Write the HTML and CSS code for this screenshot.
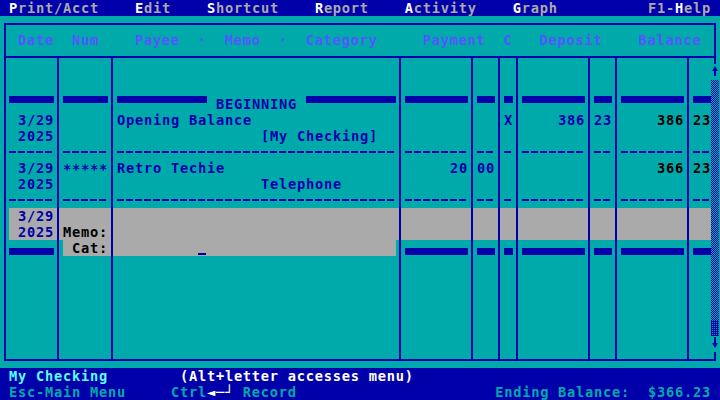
FILE: index.html
```html
<!DOCTYPE html>
<html lang="en">
<head>
<meta charset="utf-8">
<title>My Checking – Register</title>
<link rel="stylesheet" href="styles.css">
</head>
<body>
<div class="screen">
  <nav class="menubar">
    <span><span class="key">P</span>rint/Acct</span>
    <span><span class="key">E</span>dit</span>
    <span><span class="key">S</span>hortcut</span>
    <span><span class="key">R</span>eport</span>
    <span><span class="key">A</span>ctivity</span>
    <span><span class="key">G</span>raph</span>
    <span class="help">F1-<span class="key">H</span>elp</span>
  </nav>

  <main class="register">
    <div class="frame"></div>
    <div class="head"> Date  Num    Payee  ·  Memo  ·  Category     Payment  C   Deposit    Balance</div>
    <div class="rule"></div>

    <!-- highlighted entry line -->
    <div class="band"></div>
    <div class="band-cat"></div>

    <!-- column dividers -->
    <div class="vline d1"></div>
    <div class="vline d2"></div>
    <div class="vline d3"></div>
    <div class="vline d4"></div>
    <div class="vline d5"></div>
    <div class="vline d6"></div>
    <div class="vline d7"></div>
    <div class="vline d8"></div>
    <div class="vline d9"></div>

    <svg class="scrollbar" width="9" height="288" viewBox="0 0 9 288">
      <defs>
        <pattern id="shade-mid" width="2" height="2" patternUnits="userSpaceOnUse">
          <rect x="0" y="0" width="1" height="1" fill="#0000aa"/>
          <rect x="1" y="1" width="1" height="1" fill="#0000aa"/>
        </pattern>
        <pattern id="shade-dark" width="2" height="2" patternUnits="userSpaceOnUse">
          <rect x="0" y="0" width="2" height="2" fill="#0000aa"/>
          <rect x="1" y="0" width="1" height="1" fill="#00aaaa"/>
        </pattern>
      </defs>
      <path d="M4 2 L7 7 H1 Z" fill="#0000aa"/>
      <rect x="3" y="6" width="2" height="6" fill="#0000aa"/>
      <rect x="0" y="16" width="8" height="240" fill="url(#shade-mid)"/>
      <rect x="0" y="256" width="8" height="16" fill="url(#shade-dark)"/>
      <rect x="3" y="273" width="2" height="7" fill="#0000aa"/>
      <path d="M1 279 H7 L4 284 Z" fill="#0000aa"/>
    </svg>

    <!-- opening balance marker -->
    <div class="bar-top c-date r6"></div>
    <div class="bar-top c-num r6"></div>
    <div class="begin c-payee r6"><span class="bar-top"></span><span>BEGINNING</span><span class="bar-top"></span></div>
    <div class="bar-top c-pay r6"></div>
    <div class="bar-top c-payc r6"></div>
    <div class="bar-top c-clr r6"></div>
    <div class="bar-top c-dep r6"></div>
    <div class="bar-top c-depc r6"></div>
    <div class="bar-top c-bal r6"></div>
    <div class="bar-top c-balc r6"></div>

    <!-- transaction: opening balance -->
    <div class="c-date r7 right">3/29</div>
    <div class="c-payee r7">Opening Balance</div>
    <div class="c-clr r7">X</div>
    <div class="c-dep r7 right">386</div>
    <div class="c-depc r7">23</div>
    <div class="c-bal r7 right black">386</div>
    <div class="c-balc r7 black">23</div>
    <div class="c-date r8 right">2025</div>
    <div class="c-payee r8 cat">[My Checking]</div>

    <div class="dash c-date r9"></div>
    <div class="dash c-num r9"></div>
    <div class="dash c-payee r9"></div>
    <div class="dash c-pay r9"></div>
    <div class="dash c-payc r9"></div>
    <div class="dash c-clr r9"></div>
    <div class="dash c-dep r9"></div>
    <div class="dash c-depc r9"></div>
    <div class="dash c-bal r9"></div>
    <div class="dash c-balc r9"></div>

    <!-- transaction: telephone -->
    <div class="c-date r10 right">3/29</div>
    <div class="c-num r10 stars">*****</div>
    <div class="c-payee r10">Retro Techie</div>
    <div class="c-pay r10 right">20</div>
    <div class="c-payc r10">00</div>
    <div class="c-bal r10 right black">366</div>
    <div class="c-balc r10 black">23</div>
    <div class="c-date r11 right">2025</div>
    <div class="c-payee r11 cat">Telephone</div>

    <div class="dash c-date r12"></div>
    <div class="dash c-num r12"></div>
    <div class="dash c-payee r12"></div>
    <div class="dash c-pay r12"></div>
    <div class="dash c-payc r12"></div>
    <div class="dash c-clr r12"></div>
    <div class="dash c-dep r12"></div>
    <div class="dash c-depc r12"></div>
    <div class="dash c-bal r12"></div>
    <div class="dash c-balc r12"></div>

    <!-- new entry -->
    <div class="c-date r13 right">3/29</div>
    <div class="c-date r14 right">2025</div>
    <div class="c-num r14 right black">Memo:</div>
    <div class="bar-bot c-date r15"></div>
    <div class="c-num r15 right black">Cat:</div>
    <div class="cursor c-payee r15"></div>
    <div class="bar-bot c-pay r15"></div>
    <div class="bar-bot c-payc r15"></div>
    <div class="bar-bot c-clr r15"></div>
    <div class="bar-bot c-dep r15"></div>
    <div class="bar-bot c-depc r15"></div>
    <div class="bar-bot c-bal r15"></div>
    <div class="bar-bot c-balc r15"></div>
  </main>

  <footer class="status">
    <div class="status-line">
      <span class="acct">My Checking</span>
      <span class="hint">(Alt+letter accesses menu)</span>
    </div>
    <div class="status-line keys">
      <span class="esc">Esc-Main Menu</span>
      <span>Ctrl<span class="enter">◄─┘</span> Record</span>
      <span class="ending">Ending Balance:  $366.23</span>
    </div>
  </footer>
</div>
</body>
</html>
```
FILE: styles.css
```css
* {
  box-sizing: border-box;
  margin: 0;
  padding: 0;
}

html,
body {
  width: 720px;
  height: 400px;
  overflow: hidden;
}

/* 9px character cells: 13.7px DejaVu Sans Mono advances 8.25px, plus spacing */
body {
  background: #00aaaa;
  color: #0000aa;
  font-family: "DejaVu Sans Mono", "Liberation Mono", monospace;
  font-weight: bold;
  font-size: 13.7px;
  letter-spacing: 0.752px;
  line-height: 16px;
}

/* 80 x 25 character screen: 9px cells, 16px rows */
.screen {
  display: grid;
  grid-template-rows: 16px 352px 32px;
  height: 400px;
}

/* ---- menu bar ---- */
.menubar {
  display: flex;
  gap: 36px;
  padding: 0 9px;
  background: #0000aa;
  color: #aaaaaa;
  white-space: pre;
}

.menubar .key {
  color: #ffffff;
}

.menubar .help {
  margin-left: auto;
}

/* ---- register ---- */
.register {
  display: grid;
  grid-template-columns:
    9px 45px 9px 45px 9px 279px 9px
    63px 9px 18px 9px 9px 9px
    63px 9px 18px 9px 63px 9px 18px 9px;
  grid-template-rows: repeat(22, 16px);
  white-space: pre;
}

.frame {
  grid-column: 1 / -1;
  grid-row: 1 / -1;
  margin: 7px 4px;
  border: 2px solid #0000aa;
}

.head {
  grid-column: 2 / 21;
  grid-row: 2;
  color: #5555ff;
}

.rule {
  grid-column: 1 / -1;
  grid-row: 3;
  align-self: start;
  height: 2px;
  margin: 8px 4px 0;
  background: #0000aa;
}

.band {
  grid-column: 2 / 21;
  grid-row: 13 / 15;
  background: #aaaaaa;
}

.band-cat {
  grid-column: 4 / 7;
  grid-row: 15;
  background: #aaaaaa;
}

.vline {
  grid-row: 3 / 23;
  justify-self: start;
  width: 2px;
  margin: 8px 0 7px 3px;
  background: #0000aa;
}

.d1 { grid-column: 3; }
.d2 { grid-column: 5; }
.d3 { grid-column: 7; }
.d4 { grid-column: 9; }
.d5 { grid-column: 11; }
.d6 { grid-column: 13; }
.d7 { grid-column: 15; }
.d8 { grid-column: 17; }
.d9 { grid-column: 19; }

.scrollbar {
  grid-column: 21;
  grid-row: 4 / 22;
  display: block;
  background: #00aaaa;
}

/* field columns */
.c-date  { grid-column: 2; }
.c-num   { grid-column: 4; }
.c-payee { grid-column: 6; }
.c-pay   { grid-column: 8; }
.c-payc  { grid-column: 10; }
.c-clr   { grid-column: 12; }
.c-dep   { grid-column: 14; }
.c-depc  { grid-column: 16; }
.c-bal   { grid-column: 18; }
.c-balc  { grid-column: 20; }

/* screen rows */
.r6  { grid-row: 6; }
.r7  { grid-row: 7; }
.r8  { grid-row: 8; }
.r9  { grid-row: 9; }
.r10 { grid-row: 10; }
.r11 { grid-row: 11; }
.r12 { grid-row: 12; }
.r13 { grid-row: 13; }
.r14 { grid-row: 14; }
.r15 { grid-row: 15; }

.right {
  text-align: right;
}

.black {
  color: #000000;
}

.cat {
  padding-left: 144px;
}

.stars {
  padding-top: 3px;
  line-height: 13px;
}

.bar-top,
.bar-bot {
  align-self: start;
  height: 7px;
  background: #0000aa;
}

.bar-bot {
  margin-top: 8px;
}

.begin {
  display: flex;
  gap: 9px;
}

.begin .bar-top {
  flex: 0 0 90px;
}

.dash {
  align-self: start;
  height: 2px;
  margin-top: 7px;
  background: repeating-linear-gradient(90deg, #0000aa 0 7px, transparent 7px 9px);
}

.cursor {
  justify-self: start;
  align-self: start;
  width: 8px;
  height: 2px;
  margin: 13px 0 0 81px;
  background: #0000aa;
}

/* ---- status lines ---- */
.status {
  display: grid;
  grid-template-rows: 16px 16px;
  padding: 0 9px;
  background: #0000aa;
  white-space: pre;
}

.status-line {
  display: flex;
}

.acct {
  color: #55ffff;
  margin-right: 72px;
}

.hint {
  color: #ffffff;
}

.keys {
  color: #00aaaa;
}

.esc {
  margin-right: 45px;
}

.enter {
  color: #ffffff;
}

.ending {
  margin-left: auto;
}
```
